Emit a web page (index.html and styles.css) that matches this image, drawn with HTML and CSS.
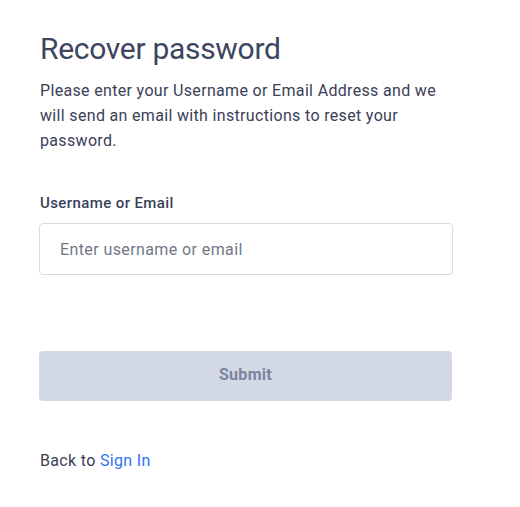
FILE: index.html
```html
<!DOCTYPE html>
<html>
<head>
<meta charset="utf-8">
<link rel="stylesheet" href="styles.css">
</head>
<body>
<main class="recover">
  <h1 class="title">Recover password</h1>
  <p class="intro">Please enter your Username or Email Address and we will send an email with instructions to reset your password.</p>
  <form class="form">
    <label class="label" for="user">Username or Email</label>
    <input class="input" id="user" type="text" placeholder="Enter username or email">
    <button class="submit" type="button">Submit</button>
  </form>
  <p class="back">Back to <a class="link" href="#">Sign In</a></p>
</main>
</body>
</html>
```
FILE: styles.css
```css
html, body {
  margin: 0;
  background: #ffffff;
}
body {
  font-family: Roboto, "Liberation Sans", sans-serif;
  color: #3b4057;
  letter-spacing: 0.33px;
}
.recover {
  width: 414px;
  padding: 30px 0 0 39px;
}
.title {
  margin: 0 0 0 1px;
  font-size: 30px;
  font-weight: 400;
  line-height: 38px;
  letter-spacing: -0.3px;
  color: #3d4560;
}
.intro {
  margin: 10px 0 0 1px;
  font-size: 16px;
  line-height: 25px;
  width: 410px;
}
.form {
  display: flex;
  flex-direction: column;
  margin-top: 40px;
}
.label {
  margin-left: 1px;
  font-size: 15px;
  font-weight: 500;
  line-height: 20px;
  letter-spacing: 0.4px;
}
.input {
  margin-top: 10px;
  height: 52px;
  box-sizing: border-box;
  border: 1px solid #d6dbe6;
  border-radius: 4px;
  padding: 0 20px;
  font-family: inherit;
  font-size: 16px;
  letter-spacing: 0.4px;
  color: #3b4057;
  outline: none;
}
.input::placeholder {
  color: #727788;
}
.submit {
  margin-top: 76px;
  width: 413px;
  height: 50px;
  padding: 0 0 3px;
  border: none;
  border-radius: 4px;
  background: #d3d8e5;
  color: #7c839f;
  font-family: inherit;
  font-size: 16px;
  font-weight: 700;
  letter-spacing: 0.3px;
}
.back {
  margin: 49px 0 0 1px;
  font-size: 16px;
  line-height: 22px;
}
.link {
  color: #2f72ee;
  text-decoration: none;
}
```
